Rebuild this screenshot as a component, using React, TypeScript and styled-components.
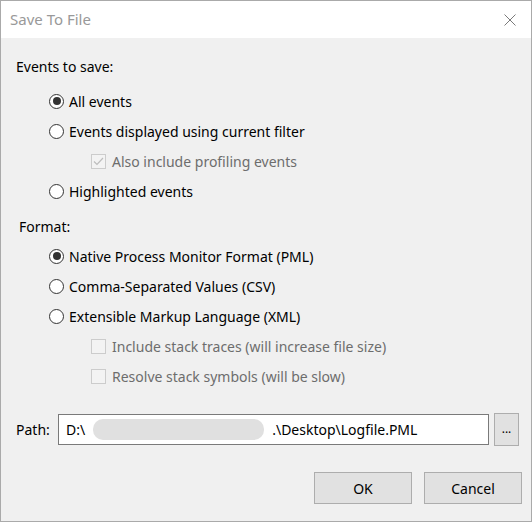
import styled, { createGlobalStyle } from "styled-components";

const GlobalStyle = createGlobalStyle`
  html, body {
    margin: 0;
    padding: 0;
    background: #ffffff;
  }
  * {
    box-sizing: border-box;
  }
`;

const FONT = `"Segoe UI", "Noto Sans", "Open Sans", sans-serif`;

export default function App() {
  return (
    <>
      <GlobalStyle />
      <Window>
        <TitleBar>
          <Title>Save To File</Title>
          <CloseButton aria-label="Close">
            <svg width="12" height="12" viewBox="0 0 12 12">
              <path d="M0.5 0.5 L11.5 11.5 M11.5 0.5 L0.5 11.5" stroke="#7a7a7a" strokeWidth="1" fill="none" />
            </svg>
          </CloseButton>
        </TitleBar>

        <Body>
          <SectionLabel $after={9}>Events to save:</SectionLabel>
          <OptionList>
            <Radio checked label="All events" />
            <Radio label="Events displayed using current filter" />
            <Check checked disabled label="Also include profiling events" />
            <Radio label="Highlighted events" />
          </OptionList>

          <SectionLabel $indent={3} $gap={11} $after={4}>Format:</SectionLabel>
          <OptionList>
            <Radio checked label="Native Process Monitor Format (PML)" />
            <Radio label="Comma-Separated Values (CSV)" />
            <Radio label="Extensible Markup Language (XML)" />
            <Check disabled label="Include stack traces (will increase file size)" />
            <Check disabled label="Resolve stack symbols (will be slow)" />
          </OptionList>

          <PathRow>
            <PathLabel>Path:</PathLabel>
            <PathField>
              <span>D:\</span>
              <Redacted />
              <span>.\Desktop\Logfile.PML</span>
            </PathField>
            <BrowseButton>...</BrowseButton>
          </PathRow>

          <ButtonRow>
            <DialogButton>OK</DialogButton>
            <DialogButton>Cancel</DialogButton>
          </ButtonRow>
        </Body>
      </Window>
    </>
  );
}

function Radio({ label, checked }: { label: string; checked?: boolean }) {
  return (
    <OptionRow $indent={33}>
      <RadioCircle $checked={checked} />
      <OptionText>{label}</OptionText>
    </OptionRow>
  );
}

function Check({ label, checked, disabled }: { label: string; checked?: boolean; disabled?: boolean }) {
  return (
    <OptionRow $indent={75}>
      <CheckBox $disabled={disabled}>
        {checked && (
          <svg width="13" height="13" viewBox="0 0 13 13">
            <path d="M2 6.5 L5 9.5 L11 3" stroke="#bdbdbd" strokeWidth="1.2" fill="none" />
          </svg>
        )}
      </CheckBox>
      <OptionText $disabled={disabled} $gap={6}>{label}</OptionText>
    </OptionRow>
  );
}

const Window = styled.div`
  width: 532px;
  height: 522px;
  border: 1px solid #aaaaaa;
  background: #f0f0f0;
  display: flex;
  flex-direction: column;
  font-family: ${FONT};
  font-size: 14px;
  color: #000000;
`;

const TitleBar = styled.div`
  height: 37px;
  flex: none;
  background: #ffffff;
  display: flex;
  align-items: center;
  justify-content: space-between;
  padding: 0 15px 0 9px;
`;

const Title = styled.div`
  font-size: 15px;
  color: #999999;
  padding-bottom: 1px;
`;

const CloseButton = styled.div`
  width: 12px;
  height: 12px;
  display: flex;
`;

const Body = styled.div`
  flex: 1;
  display: flex;
  flex-direction: column;
  padding: 19px 9px 0 15px;
`;

const SectionLabel = styled.div<{ $indent?: number; $gap?: number; $after?: number }>`
  height: 20px;
  line-height: 20px;
  padding-left: ${(p) => p.$indent ?? 0}px;
  margin-top: ${(p) => p.$gap ?? 0}px;
  margin-bottom: ${(p) => p.$after ?? 0}px;
`;

const OptionList = styled.div`
  display: flex;
  flex-direction: column;
`;

const OptionRow = styled.div<{ $indent: number }>`
  height: 30px;
  display: flex;
  align-items: center;
  padding-left: ${(p) => p.$indent}px;
`;

const RadioCircle = styled.span<{ $checked?: boolean }>`
  width: 15px;
  height: 15px;
  border-radius: 50%;
  border: 1px solid #333333;
  background: #ffffff;
  display: flex;
  align-items: center;
  justify-content: center;
  flex: none;

  &::after {
    content: "";
    display: ${(p) => (p.$checked ? "block" : "none")};
    width: 8px;
    height: 8px;
    border-radius: 50%;
    background: #333333;
  }
`;

const CheckBox = styled.span<{ $disabled?: boolean }>`
  width: 15px;
  height: 15px;
  flex: none;
  border: 1px solid ${(p) => (p.$disabled ? "#cccccc" : "#333333")};
  background: ${(p) => (p.$disabled ? "#f3f3f3" : "#ffffff")};
  display: flex;
  align-items: center;
  justify-content: center;
`;

const OptionText = styled.span<{ $disabled?: boolean; $gap?: number }>`
  margin-left: ${(p) => p.$gap ?? 5}px;
  color: ${(p) => (p.$disabled ? "#6d6d6d" : "#000000")};
  white-space: nowrap;
`;

const PathRow = styled.div`
  display: flex;
  align-items: center;
  margin-top: 22px;
  height: 33px;
`;

const PathLabel = styled.span`
  width: 42px;
  flex: none;
`;

const PathField = styled.div`
  width: 431px;
  height: 31px;
  background: #ffffff;
  border: 1px solid #7a7a7a;
  display: flex;
  align-items: center;
  padding-left: 7px;
  white-space: nowrap;
`;

const Redacted = styled.span`
  width: 171px;
  height: 21px;
  border-radius: 10px;
  background: #e0e0e0;
  margin: 0 8px 0 8px;
  flex: none;
`;

const BrowseButton = styled.div`
  width: 25px;
  height: 33px;
  margin-left: 5px;
  background: #e1e1e1;
  border: 1px solid #adadad;
  display: flex;
  align-items: center;
  justify-content: center;
  font-size: 12px;
  padding-bottom: 3px;
`;

const ButtonRow = styled.div`
  display: flex;
  justify-content: flex-end;
  gap: 12px;
  margin-top: 26px;
`;

const DialogButton = styled.div`
  width: 98px;
  height: 32px;
  background: #e1e1e1;
  border: 1px solid #adadad;
  display: flex;
  align-items: center;
  justify-content: center;
`;
